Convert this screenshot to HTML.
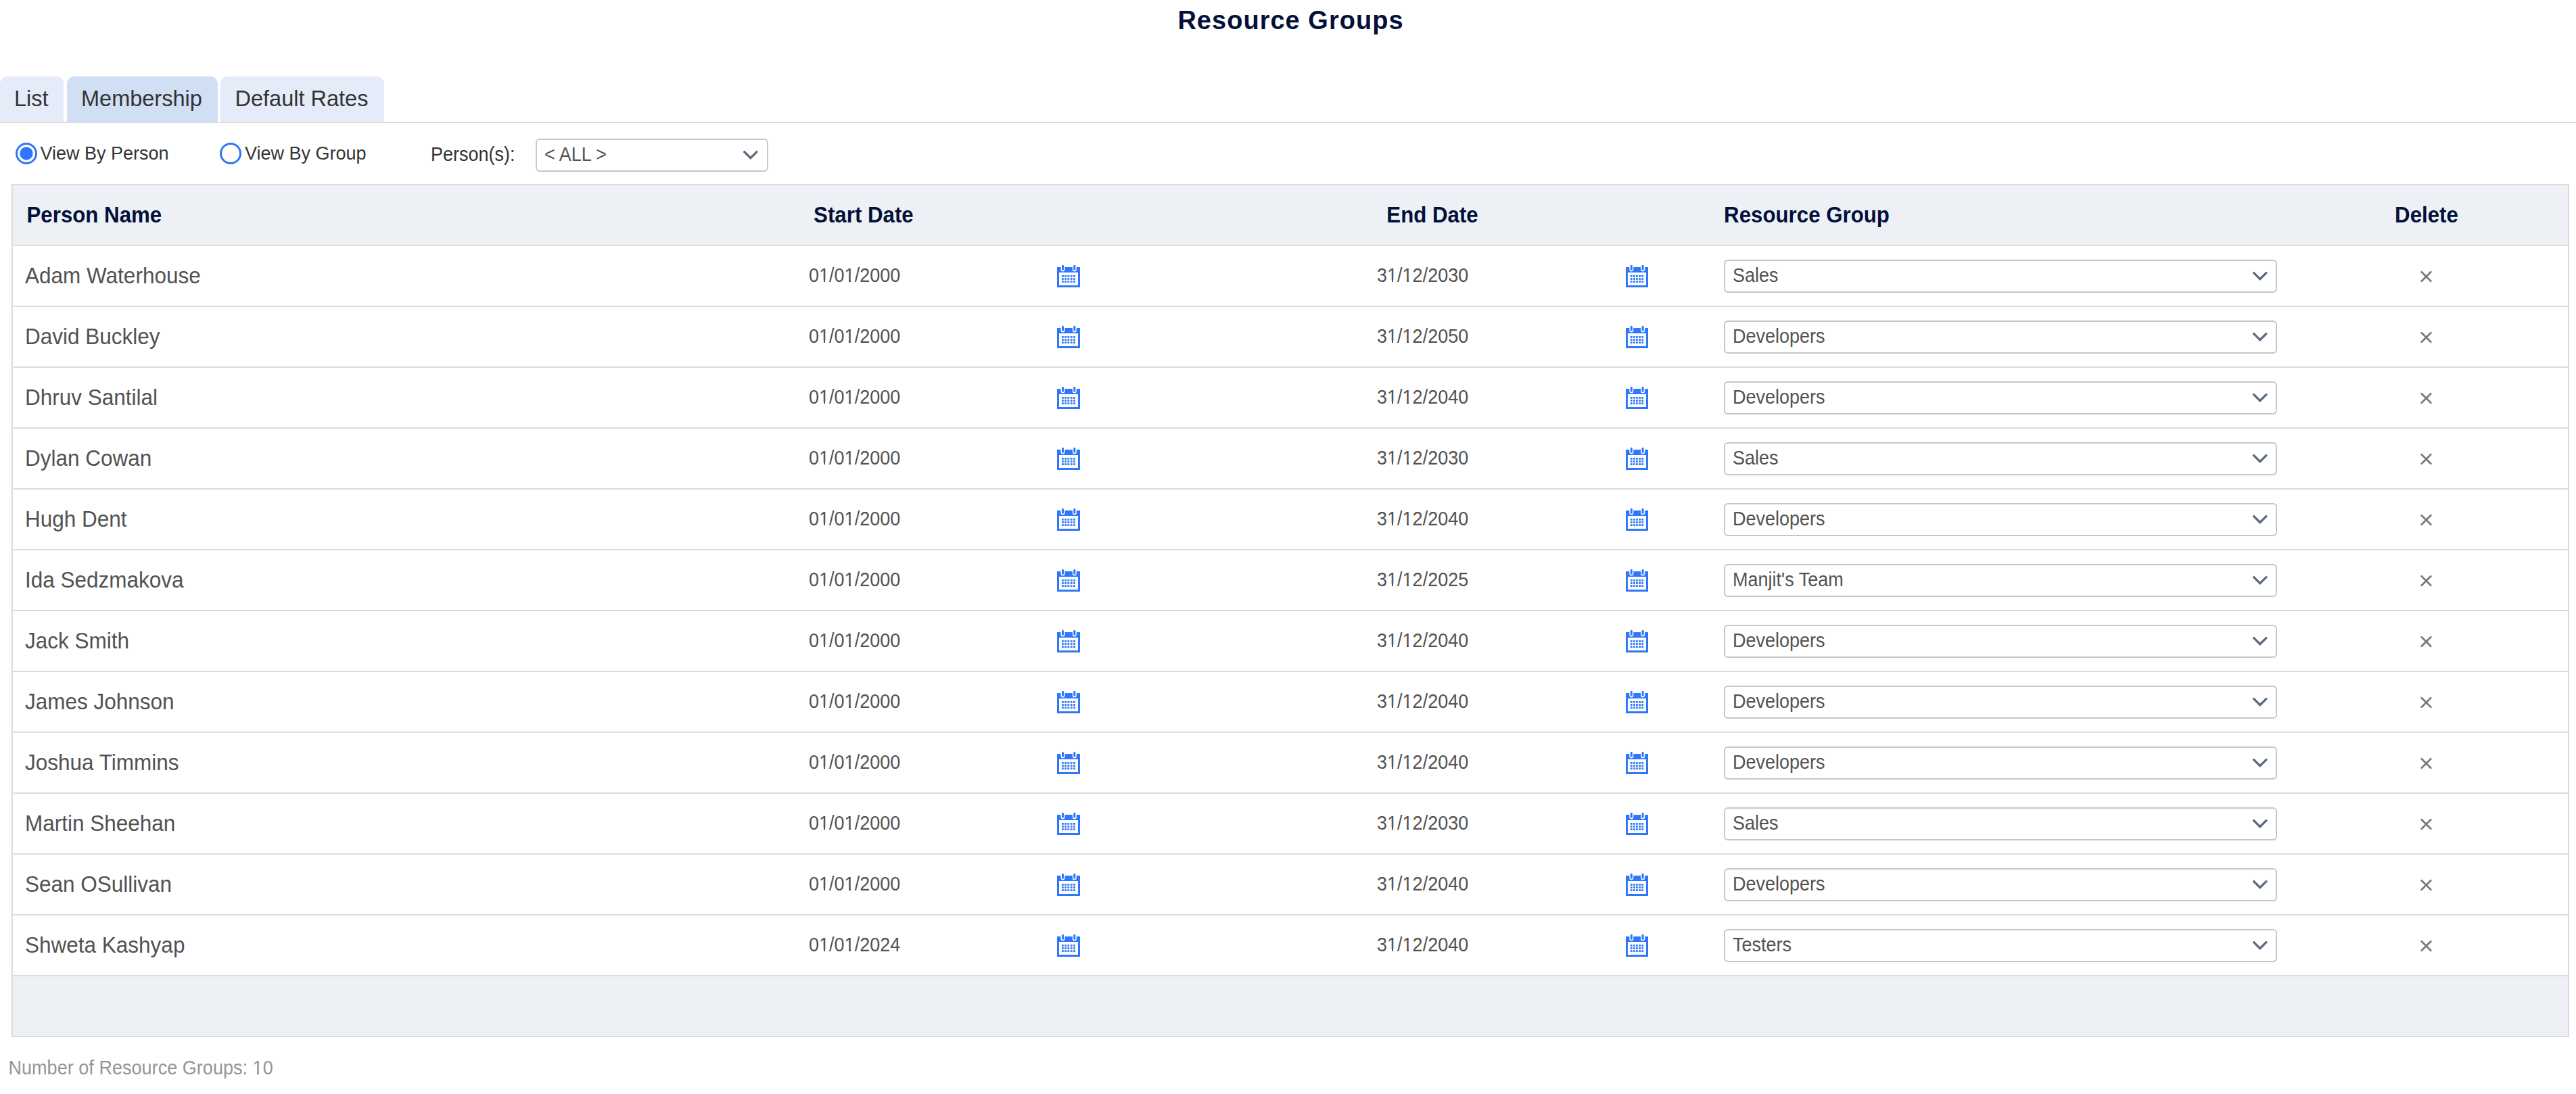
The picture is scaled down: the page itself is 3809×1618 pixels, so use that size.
<!DOCTYPE html><html><head><meta charset="utf-8"><style>
*{box-sizing:border-box;margin:0;padding:0}
html,body{width:3809px;height:1618px;overflow:hidden;background:#fff}
body{position:relative;font-family:"Liberation Sans",sans-serif;color:#525252}
.a{position:absolute;white-space:nowrap}
.title{left:0;top:0;width:3809px;text-align:center;font-size:38px;font-weight:700;color:#02103a;letter-spacing:1.02px;line-height:38px;top:11px;padding-left:8px}
.tab{position:absolute;top:113px;height:67px;border-radius:11px 11px 0 0;background:#e5ebf8;font-size:32.5px;line-height:32.5px;color:#333;padding-top:17px}
.tab.on{background:#d1dff5}
.tabline{position:absolute;left:0;top:180px;width:3809px;height:2px;background:#dcdcdc}
.radio{position:absolute;top:211px;width:32px;height:32px;border-radius:50%;border:3px solid #3176f8;background:#fff}
.radio.on::after{content:"";position:absolute;left:3.5px;top:3.5px;width:19px;height:19px;border-radius:50%;background:#3176f8}
.lbl{font-size:27px;line-height:27px;color:#333}
.sel{position:absolute;border:2px solid #c6c6c6;border-radius:6px;background:#fff}
.tbl{position:absolute;left:17px;top:272px;width:3782px;height:1262px;border:2px solid #dcdcdc;background:#fff}
.hdr{position:absolute;left:0;top:0;width:3778px;height:90px;background:#edf1f6;border-bottom:2px solid #dcdcdc}
.row{position:absolute;left:0;width:3778px;height:90px;border-bottom:2px solid #dcdcdc}
.foot{position:absolute;left:0;top:1170px;width:3778px;height:88px;background:#edf1f6}
.h{position:absolute;top:29px;transform:scaleY(1.04);transform-origin:0 26px;font-size:31.25px;line-height:31.25px;font-weight:700;color:#02103a}
.nm{position:absolute;font-size:31.5px;line-height:31.5px;color:#525252;transform:scaleY(1.04);transform-origin:0 26px}
.dt{position:absolute;font-size:27px;line-height:27px;color:#525252;transform:scaleY(1.06);transform-origin:0 22px}
.one{font-style:normal;position:relative}
.one::before,.one::after{content:"";position:absolute;top:calc(0.905em - 0.115em);height:0.15em;background:#fff}
.one::before{left:0.03em;width:0.216em}
.one::after{left:0.342em;width:0.18em}
</style></head><body>
<div class="a title">Resource Groups</div>
<div class="tab" style="left:0;width:94px;padding-left:21px">List</div>
<div class="tab on" style="left:99px;width:223px;padding-left:21px">Membership</div>
<div class="tab" style="left:326px;width:242px;padding-left:21.5px">Default Rates</div>
<div class="tabline"></div>
<svg class="a" style="left:23px;top:211px" width="32" height="32" viewBox="0 0 32 32"><circle cx="16" cy="16" r="14.5" fill="#fff" stroke="#2f75f9" stroke-width="3"/><circle cx="16" cy="16" r="9.7" fill="#2f75f9"/></svg>
<div class="a lbl" style="left:59.5px;top:213.5px">View By Person</div>
<svg class="a" style="left:325px;top:211px" width="32" height="32" viewBox="0 0 32 32"><circle cx="16" cy="16" r="14.5" fill="#fff" stroke="#2f75f9" stroke-width="3"/></svg>
<div class="a lbl" style="left:362px;top:213.5px">View By Group</div>
<div class="a lbl" style="left:637px;top:216px;transform:scaleY(1.06);transform-origin:0 22px">Person(s):</div>
<div class="sel" style="left:792px;top:205px;width:343.5px;height:49px"></div>
<div class="a lbl" style="left:805px;top:216px;color:#555;transform:scaleY(1.06);transform-origin:0 22px">&lt; ALL &gt;</div>
<div class="a" style="left:1098px;top:220.5px"><svg width="24" height="15" viewBox="0 0 24 15"><path d="M1.7 2.6L11.8 12.7L21.9 2.6" fill="none" stroke="#5a6a7c" stroke-width="3.3"/></svg></div>
<div class="tbl">
<div class="hdr">
<div class="a h" style="left:20.5px">Person Name</div>
<div class="a h" style="left:1184.1px">Start Date</div>
<div class="a h" style="left:2031.3px">End Date</div>
<div class="a h" style="left:2530.1px">Resource Group</div>
<div class="a h" style="left:3522.1px">Delete</div>
</div>
<div class="row" style="top:90px">
<div class="a nm" style="left:18px;top:29px">Adam Waterhouse</div>
<div class="a dt" style="left:1177px;top:31px">0<i class="one">1</i>/0<i class="one">1</i>/2000</div>
<div class="a" style="left:1544px;top:27px"><svg width="34" height="34" viewBox="0 0 34 34" fill="#2e77fc"><path fill-rule="evenodd" d="M0 4H34V34H0Z M3 12H31V31H3Z"/><rect x="5.50" y="1.5" width="6" height="9" rx="3" fill="#fff"/><rect x="22.80" y="1.5" width="6" height="9" rx="3" fill="#fff"/><rect x="7.00" y="0.8" width="3" height="8" rx="1.5"/><rect x="24.30" y="0.8" width="3" height="8" rx="1.5"/><rect x="7" y="16" width="2.8" height="2.8"/><rect x="11.2" y="16" width="2.8" height="2.8"/><rect x="15.4" y="16" width="2.8" height="2.8"/><rect x="19.8" y="16" width="2.8" height="2.8"/><rect x="24.1" y="16" width="2.8" height="2.8"/><rect x="7" y="20.1" width="2.8" height="2.8"/><rect x="11.2" y="20.1" width="2.8" height="2.8"/><rect x="15.4" y="20.1" width="2.8" height="2.8"/><rect x="19.8" y="20.1" width="2.8" height="2.8"/><rect x="24.1" y="20.1" width="2.8" height="2.8"/><rect x="7" y="24.2" width="2.8" height="2.8"/><rect x="11.2" y="24.2" width="2.8" height="2.8"/><rect x="15.4" y="24.2" width="2.8" height="2.8"/><rect x="19.8" y="24.2" width="2.8" height="2.8"/><rect x="24.1" y="24.2" width="2.8" height="2.8"/></svg></div>
<div class="a dt" style="left:2017px;top:31px">3<i class="one">1</i>/<i class="one">1</i>2/2030</div>
<div class="a" style="left:2385px;top:27px"><svg width="33" height="34" viewBox="0 0 33 34" fill="#2e77fc"><path fill-rule="evenodd" d="M0 4H33V34H0Z M2.9 12H30V31H2.9Z"/><rect x="5.30" y="1.5" width="6" height="9" rx="3" fill="#fff"/><rect x="22.10" y="1.5" width="6" height="9" rx="3" fill="#fff"/><rect x="6.80" y="0.8" width="3" height="8" rx="1.5"/><rect x="23.60" y="0.8" width="3" height="8" rx="1.5"/><rect x="6.8" y="16" width="2.8" height="2.8"/><rect x="11.1" y="16" width="2.8" height="2.8"/><rect x="15.0" y="16" width="2.8" height="2.8"/><rect x="19.2" y="16" width="2.8" height="2.8"/><rect x="23.3" y="16" width="2.8" height="2.8"/><rect x="6.8" y="20.1" width="2.8" height="2.8"/><rect x="11.1" y="20.1" width="2.8" height="2.8"/><rect x="15.0" y="20.1" width="2.8" height="2.8"/><rect x="19.2" y="20.1" width="2.8" height="2.8"/><rect x="23.3" y="20.1" width="2.8" height="2.8"/><rect x="6.8" y="24.2" width="2.8" height="2.8"/><rect x="11.1" y="24.2" width="2.8" height="2.8"/><rect x="15.0" y="24.2" width="2.8" height="2.8"/><rect x="19.2" y="24.2" width="2.8" height="2.8"/><rect x="23.3" y="24.2" width="2.8" height="2.8"/></svg></div>
<div class="sel" style="left:2530px;top:20px;width:818px;height:49px"></div>
<div class="a dt" style="left:2543px;top:31px">Sales</div>
<div class="a" style="left:3311px;top:35.5px"><svg width="24" height="15" viewBox="0 0 24 15"><path d="M1.7 2.6L11.8 12.7L21.9 2.6" fill="none" stroke="#5a6a7c" stroke-width="3.3"/></svg></div>
<div class="a" style="left:3559px;top:35.5px"><svg width="18" height="18" viewBox="0 0 18 18"><path d="M2.7 2.2L16.3 15.8M16.3 2.2L2.7 15.8" fill="none" stroke="#7a7a7a" stroke-width="2.7" stroke-linecap="round"/></svg></div>
</div>
<div class="row" style="top:180px">
<div class="a nm" style="left:18px;top:29px">David Buckley</div>
<div class="a dt" style="left:1177px;top:31px">0<i class="one">1</i>/0<i class="one">1</i>/2000</div>
<div class="a" style="left:1544px;top:27px"><svg width="34" height="34" viewBox="0 0 34 34" fill="#2e77fc"><path fill-rule="evenodd" d="M0 4H34V34H0Z M3 12H31V31H3Z"/><rect x="5.50" y="1.5" width="6" height="9" rx="3" fill="#fff"/><rect x="22.80" y="1.5" width="6" height="9" rx="3" fill="#fff"/><rect x="7.00" y="0.8" width="3" height="8" rx="1.5"/><rect x="24.30" y="0.8" width="3" height="8" rx="1.5"/><rect x="7" y="16" width="2.8" height="2.8"/><rect x="11.2" y="16" width="2.8" height="2.8"/><rect x="15.4" y="16" width="2.8" height="2.8"/><rect x="19.8" y="16" width="2.8" height="2.8"/><rect x="24.1" y="16" width="2.8" height="2.8"/><rect x="7" y="20.1" width="2.8" height="2.8"/><rect x="11.2" y="20.1" width="2.8" height="2.8"/><rect x="15.4" y="20.1" width="2.8" height="2.8"/><rect x="19.8" y="20.1" width="2.8" height="2.8"/><rect x="24.1" y="20.1" width="2.8" height="2.8"/><rect x="7" y="24.2" width="2.8" height="2.8"/><rect x="11.2" y="24.2" width="2.8" height="2.8"/><rect x="15.4" y="24.2" width="2.8" height="2.8"/><rect x="19.8" y="24.2" width="2.8" height="2.8"/><rect x="24.1" y="24.2" width="2.8" height="2.8"/></svg></div>
<div class="a dt" style="left:2017px;top:31px">3<i class="one">1</i>/<i class="one">1</i>2/2050</div>
<div class="a" style="left:2385px;top:27px"><svg width="33" height="34" viewBox="0 0 33 34" fill="#2e77fc"><path fill-rule="evenodd" d="M0 4H33V34H0Z M2.9 12H30V31H2.9Z"/><rect x="5.30" y="1.5" width="6" height="9" rx="3" fill="#fff"/><rect x="22.10" y="1.5" width="6" height="9" rx="3" fill="#fff"/><rect x="6.80" y="0.8" width="3" height="8" rx="1.5"/><rect x="23.60" y="0.8" width="3" height="8" rx="1.5"/><rect x="6.8" y="16" width="2.8" height="2.8"/><rect x="11.1" y="16" width="2.8" height="2.8"/><rect x="15.0" y="16" width="2.8" height="2.8"/><rect x="19.2" y="16" width="2.8" height="2.8"/><rect x="23.3" y="16" width="2.8" height="2.8"/><rect x="6.8" y="20.1" width="2.8" height="2.8"/><rect x="11.1" y="20.1" width="2.8" height="2.8"/><rect x="15.0" y="20.1" width="2.8" height="2.8"/><rect x="19.2" y="20.1" width="2.8" height="2.8"/><rect x="23.3" y="20.1" width="2.8" height="2.8"/><rect x="6.8" y="24.2" width="2.8" height="2.8"/><rect x="11.1" y="24.2" width="2.8" height="2.8"/><rect x="15.0" y="24.2" width="2.8" height="2.8"/><rect x="19.2" y="24.2" width="2.8" height="2.8"/><rect x="23.3" y="24.2" width="2.8" height="2.8"/></svg></div>
<div class="sel" style="left:2530px;top:20px;width:818px;height:49px"></div>
<div class="a dt" style="left:2543px;top:31px">Developers</div>
<div class="a" style="left:3311px;top:35.5px"><svg width="24" height="15" viewBox="0 0 24 15"><path d="M1.7 2.6L11.8 12.7L21.9 2.6" fill="none" stroke="#5a6a7c" stroke-width="3.3"/></svg></div>
<div class="a" style="left:3559px;top:35.5px"><svg width="18" height="18" viewBox="0 0 18 18"><path d="M2.7 2.2L16.3 15.8M16.3 2.2L2.7 15.8" fill="none" stroke="#7a7a7a" stroke-width="2.7" stroke-linecap="round"/></svg></div>
</div>
<div class="row" style="top:270px">
<div class="a nm" style="left:18px;top:29px">Dhruv Santilal</div>
<div class="a dt" style="left:1177px;top:31px">0<i class="one">1</i>/0<i class="one">1</i>/2000</div>
<div class="a" style="left:1544px;top:27px"><svg width="34" height="34" viewBox="0 0 34 34" fill="#2e77fc"><path fill-rule="evenodd" d="M0 4H34V34H0Z M3 12H31V31H3Z"/><rect x="5.50" y="1.5" width="6" height="9" rx="3" fill="#fff"/><rect x="22.80" y="1.5" width="6" height="9" rx="3" fill="#fff"/><rect x="7.00" y="0.8" width="3" height="8" rx="1.5"/><rect x="24.30" y="0.8" width="3" height="8" rx="1.5"/><rect x="7" y="16" width="2.8" height="2.8"/><rect x="11.2" y="16" width="2.8" height="2.8"/><rect x="15.4" y="16" width="2.8" height="2.8"/><rect x="19.8" y="16" width="2.8" height="2.8"/><rect x="24.1" y="16" width="2.8" height="2.8"/><rect x="7" y="20.1" width="2.8" height="2.8"/><rect x="11.2" y="20.1" width="2.8" height="2.8"/><rect x="15.4" y="20.1" width="2.8" height="2.8"/><rect x="19.8" y="20.1" width="2.8" height="2.8"/><rect x="24.1" y="20.1" width="2.8" height="2.8"/><rect x="7" y="24.2" width="2.8" height="2.8"/><rect x="11.2" y="24.2" width="2.8" height="2.8"/><rect x="15.4" y="24.2" width="2.8" height="2.8"/><rect x="19.8" y="24.2" width="2.8" height="2.8"/><rect x="24.1" y="24.2" width="2.8" height="2.8"/></svg></div>
<div class="a dt" style="left:2017px;top:31px">3<i class="one">1</i>/<i class="one">1</i>2/2040</div>
<div class="a" style="left:2385px;top:27px"><svg width="33" height="34" viewBox="0 0 33 34" fill="#2e77fc"><path fill-rule="evenodd" d="M0 4H33V34H0Z M2.9 12H30V31H2.9Z"/><rect x="5.30" y="1.5" width="6" height="9" rx="3" fill="#fff"/><rect x="22.10" y="1.5" width="6" height="9" rx="3" fill="#fff"/><rect x="6.80" y="0.8" width="3" height="8" rx="1.5"/><rect x="23.60" y="0.8" width="3" height="8" rx="1.5"/><rect x="6.8" y="16" width="2.8" height="2.8"/><rect x="11.1" y="16" width="2.8" height="2.8"/><rect x="15.0" y="16" width="2.8" height="2.8"/><rect x="19.2" y="16" width="2.8" height="2.8"/><rect x="23.3" y="16" width="2.8" height="2.8"/><rect x="6.8" y="20.1" width="2.8" height="2.8"/><rect x="11.1" y="20.1" width="2.8" height="2.8"/><rect x="15.0" y="20.1" width="2.8" height="2.8"/><rect x="19.2" y="20.1" width="2.8" height="2.8"/><rect x="23.3" y="20.1" width="2.8" height="2.8"/><rect x="6.8" y="24.2" width="2.8" height="2.8"/><rect x="11.1" y="24.2" width="2.8" height="2.8"/><rect x="15.0" y="24.2" width="2.8" height="2.8"/><rect x="19.2" y="24.2" width="2.8" height="2.8"/><rect x="23.3" y="24.2" width="2.8" height="2.8"/></svg></div>
<div class="sel" style="left:2530px;top:20px;width:818px;height:49px"></div>
<div class="a dt" style="left:2543px;top:31px">Developers</div>
<div class="a" style="left:3311px;top:35.5px"><svg width="24" height="15" viewBox="0 0 24 15"><path d="M1.7 2.6L11.8 12.7L21.9 2.6" fill="none" stroke="#5a6a7c" stroke-width="3.3"/></svg></div>
<div class="a" style="left:3559px;top:35.5px"><svg width="18" height="18" viewBox="0 0 18 18"><path d="M2.7 2.2L16.3 15.8M16.3 2.2L2.7 15.8" fill="none" stroke="#7a7a7a" stroke-width="2.7" stroke-linecap="round"/></svg></div>
</div>
<div class="row" style="top:360px">
<div class="a nm" style="left:18px;top:29px">Dylan Cowan</div>
<div class="a dt" style="left:1177px;top:31px">0<i class="one">1</i>/0<i class="one">1</i>/2000</div>
<div class="a" style="left:1544px;top:27px"><svg width="34" height="34" viewBox="0 0 34 34" fill="#2e77fc"><path fill-rule="evenodd" d="M0 4H34V34H0Z M3 12H31V31H3Z"/><rect x="5.50" y="1.5" width="6" height="9" rx="3" fill="#fff"/><rect x="22.80" y="1.5" width="6" height="9" rx="3" fill="#fff"/><rect x="7.00" y="0.8" width="3" height="8" rx="1.5"/><rect x="24.30" y="0.8" width="3" height="8" rx="1.5"/><rect x="7" y="16" width="2.8" height="2.8"/><rect x="11.2" y="16" width="2.8" height="2.8"/><rect x="15.4" y="16" width="2.8" height="2.8"/><rect x="19.8" y="16" width="2.8" height="2.8"/><rect x="24.1" y="16" width="2.8" height="2.8"/><rect x="7" y="20.1" width="2.8" height="2.8"/><rect x="11.2" y="20.1" width="2.8" height="2.8"/><rect x="15.4" y="20.1" width="2.8" height="2.8"/><rect x="19.8" y="20.1" width="2.8" height="2.8"/><rect x="24.1" y="20.1" width="2.8" height="2.8"/><rect x="7" y="24.2" width="2.8" height="2.8"/><rect x="11.2" y="24.2" width="2.8" height="2.8"/><rect x="15.4" y="24.2" width="2.8" height="2.8"/><rect x="19.8" y="24.2" width="2.8" height="2.8"/><rect x="24.1" y="24.2" width="2.8" height="2.8"/></svg></div>
<div class="a dt" style="left:2017px;top:31px">3<i class="one">1</i>/<i class="one">1</i>2/2030</div>
<div class="a" style="left:2385px;top:27px"><svg width="33" height="34" viewBox="0 0 33 34" fill="#2e77fc"><path fill-rule="evenodd" d="M0 4H33V34H0Z M2.9 12H30V31H2.9Z"/><rect x="5.30" y="1.5" width="6" height="9" rx="3" fill="#fff"/><rect x="22.10" y="1.5" width="6" height="9" rx="3" fill="#fff"/><rect x="6.80" y="0.8" width="3" height="8" rx="1.5"/><rect x="23.60" y="0.8" width="3" height="8" rx="1.5"/><rect x="6.8" y="16" width="2.8" height="2.8"/><rect x="11.1" y="16" width="2.8" height="2.8"/><rect x="15.0" y="16" width="2.8" height="2.8"/><rect x="19.2" y="16" width="2.8" height="2.8"/><rect x="23.3" y="16" width="2.8" height="2.8"/><rect x="6.8" y="20.1" width="2.8" height="2.8"/><rect x="11.1" y="20.1" width="2.8" height="2.8"/><rect x="15.0" y="20.1" width="2.8" height="2.8"/><rect x="19.2" y="20.1" width="2.8" height="2.8"/><rect x="23.3" y="20.1" width="2.8" height="2.8"/><rect x="6.8" y="24.2" width="2.8" height="2.8"/><rect x="11.1" y="24.2" width="2.8" height="2.8"/><rect x="15.0" y="24.2" width="2.8" height="2.8"/><rect x="19.2" y="24.2" width="2.8" height="2.8"/><rect x="23.3" y="24.2" width="2.8" height="2.8"/></svg></div>
<div class="sel" style="left:2530px;top:20px;width:818px;height:49px"></div>
<div class="a dt" style="left:2543px;top:31px">Sales</div>
<div class="a" style="left:3311px;top:35.5px"><svg width="24" height="15" viewBox="0 0 24 15"><path d="M1.7 2.6L11.8 12.7L21.9 2.6" fill="none" stroke="#5a6a7c" stroke-width="3.3"/></svg></div>
<div class="a" style="left:3559px;top:35.5px"><svg width="18" height="18" viewBox="0 0 18 18"><path d="M2.7 2.2L16.3 15.8M16.3 2.2L2.7 15.8" fill="none" stroke="#7a7a7a" stroke-width="2.7" stroke-linecap="round"/></svg></div>
</div>
<div class="row" style="top:450px">
<div class="a nm" style="left:18px;top:29px">Hugh Dent</div>
<div class="a dt" style="left:1177px;top:31px">0<i class="one">1</i>/0<i class="one">1</i>/2000</div>
<div class="a" style="left:1544px;top:27px"><svg width="34" height="34" viewBox="0 0 34 34" fill="#2e77fc"><path fill-rule="evenodd" d="M0 4H34V34H0Z M3 12H31V31H3Z"/><rect x="5.50" y="1.5" width="6" height="9" rx="3" fill="#fff"/><rect x="22.80" y="1.5" width="6" height="9" rx="3" fill="#fff"/><rect x="7.00" y="0.8" width="3" height="8" rx="1.5"/><rect x="24.30" y="0.8" width="3" height="8" rx="1.5"/><rect x="7" y="16" width="2.8" height="2.8"/><rect x="11.2" y="16" width="2.8" height="2.8"/><rect x="15.4" y="16" width="2.8" height="2.8"/><rect x="19.8" y="16" width="2.8" height="2.8"/><rect x="24.1" y="16" width="2.8" height="2.8"/><rect x="7" y="20.1" width="2.8" height="2.8"/><rect x="11.2" y="20.1" width="2.8" height="2.8"/><rect x="15.4" y="20.1" width="2.8" height="2.8"/><rect x="19.8" y="20.1" width="2.8" height="2.8"/><rect x="24.1" y="20.1" width="2.8" height="2.8"/><rect x="7" y="24.2" width="2.8" height="2.8"/><rect x="11.2" y="24.2" width="2.8" height="2.8"/><rect x="15.4" y="24.2" width="2.8" height="2.8"/><rect x="19.8" y="24.2" width="2.8" height="2.8"/><rect x="24.1" y="24.2" width="2.8" height="2.8"/></svg></div>
<div class="a dt" style="left:2017px;top:31px">3<i class="one">1</i>/<i class="one">1</i>2/2040</div>
<div class="a" style="left:2385px;top:27px"><svg width="33" height="34" viewBox="0 0 33 34" fill="#2e77fc"><path fill-rule="evenodd" d="M0 4H33V34H0Z M2.9 12H30V31H2.9Z"/><rect x="5.30" y="1.5" width="6" height="9" rx="3" fill="#fff"/><rect x="22.10" y="1.5" width="6" height="9" rx="3" fill="#fff"/><rect x="6.80" y="0.8" width="3" height="8" rx="1.5"/><rect x="23.60" y="0.8" width="3" height="8" rx="1.5"/><rect x="6.8" y="16" width="2.8" height="2.8"/><rect x="11.1" y="16" width="2.8" height="2.8"/><rect x="15.0" y="16" width="2.8" height="2.8"/><rect x="19.2" y="16" width="2.8" height="2.8"/><rect x="23.3" y="16" width="2.8" height="2.8"/><rect x="6.8" y="20.1" width="2.8" height="2.8"/><rect x="11.1" y="20.1" width="2.8" height="2.8"/><rect x="15.0" y="20.1" width="2.8" height="2.8"/><rect x="19.2" y="20.1" width="2.8" height="2.8"/><rect x="23.3" y="20.1" width="2.8" height="2.8"/><rect x="6.8" y="24.2" width="2.8" height="2.8"/><rect x="11.1" y="24.2" width="2.8" height="2.8"/><rect x="15.0" y="24.2" width="2.8" height="2.8"/><rect x="19.2" y="24.2" width="2.8" height="2.8"/><rect x="23.3" y="24.2" width="2.8" height="2.8"/></svg></div>
<div class="sel" style="left:2530px;top:20px;width:818px;height:49px"></div>
<div class="a dt" style="left:2543px;top:31px">Developers</div>
<div class="a" style="left:3311px;top:35.5px"><svg width="24" height="15" viewBox="0 0 24 15"><path d="M1.7 2.6L11.8 12.7L21.9 2.6" fill="none" stroke="#5a6a7c" stroke-width="3.3"/></svg></div>
<div class="a" style="left:3559px;top:35.5px"><svg width="18" height="18" viewBox="0 0 18 18"><path d="M2.7 2.2L16.3 15.8M16.3 2.2L2.7 15.8" fill="none" stroke="#7a7a7a" stroke-width="2.7" stroke-linecap="round"/></svg></div>
</div>
<div class="row" style="top:540px">
<div class="a nm" style="left:18px;top:29px">Ida Sedzmakova</div>
<div class="a dt" style="left:1177px;top:31px">0<i class="one">1</i>/0<i class="one">1</i>/2000</div>
<div class="a" style="left:1544px;top:27px"><svg width="34" height="34" viewBox="0 0 34 34" fill="#2e77fc"><path fill-rule="evenodd" d="M0 4H34V34H0Z M3 12H31V31H3Z"/><rect x="5.50" y="1.5" width="6" height="9" rx="3" fill="#fff"/><rect x="22.80" y="1.5" width="6" height="9" rx="3" fill="#fff"/><rect x="7.00" y="0.8" width="3" height="8" rx="1.5"/><rect x="24.30" y="0.8" width="3" height="8" rx="1.5"/><rect x="7" y="16" width="2.8" height="2.8"/><rect x="11.2" y="16" width="2.8" height="2.8"/><rect x="15.4" y="16" width="2.8" height="2.8"/><rect x="19.8" y="16" width="2.8" height="2.8"/><rect x="24.1" y="16" width="2.8" height="2.8"/><rect x="7" y="20.1" width="2.8" height="2.8"/><rect x="11.2" y="20.1" width="2.8" height="2.8"/><rect x="15.4" y="20.1" width="2.8" height="2.8"/><rect x="19.8" y="20.1" width="2.8" height="2.8"/><rect x="24.1" y="20.1" width="2.8" height="2.8"/><rect x="7" y="24.2" width="2.8" height="2.8"/><rect x="11.2" y="24.2" width="2.8" height="2.8"/><rect x="15.4" y="24.2" width="2.8" height="2.8"/><rect x="19.8" y="24.2" width="2.8" height="2.8"/><rect x="24.1" y="24.2" width="2.8" height="2.8"/></svg></div>
<div class="a dt" style="left:2017px;top:31px">3<i class="one">1</i>/<i class="one">1</i>2/2025</div>
<div class="a" style="left:2385px;top:27px"><svg width="33" height="34" viewBox="0 0 33 34" fill="#2e77fc"><path fill-rule="evenodd" d="M0 4H33V34H0Z M2.9 12H30V31H2.9Z"/><rect x="5.30" y="1.5" width="6" height="9" rx="3" fill="#fff"/><rect x="22.10" y="1.5" width="6" height="9" rx="3" fill="#fff"/><rect x="6.80" y="0.8" width="3" height="8" rx="1.5"/><rect x="23.60" y="0.8" width="3" height="8" rx="1.5"/><rect x="6.8" y="16" width="2.8" height="2.8"/><rect x="11.1" y="16" width="2.8" height="2.8"/><rect x="15.0" y="16" width="2.8" height="2.8"/><rect x="19.2" y="16" width="2.8" height="2.8"/><rect x="23.3" y="16" width="2.8" height="2.8"/><rect x="6.8" y="20.1" width="2.8" height="2.8"/><rect x="11.1" y="20.1" width="2.8" height="2.8"/><rect x="15.0" y="20.1" width="2.8" height="2.8"/><rect x="19.2" y="20.1" width="2.8" height="2.8"/><rect x="23.3" y="20.1" width="2.8" height="2.8"/><rect x="6.8" y="24.2" width="2.8" height="2.8"/><rect x="11.1" y="24.2" width="2.8" height="2.8"/><rect x="15.0" y="24.2" width="2.8" height="2.8"/><rect x="19.2" y="24.2" width="2.8" height="2.8"/><rect x="23.3" y="24.2" width="2.8" height="2.8"/></svg></div>
<div class="sel" style="left:2530px;top:20px;width:818px;height:49px"></div>
<div class="a dt" style="left:2543px;top:31px">Manjit's Team</div>
<div class="a" style="left:3311px;top:35.5px"><svg width="24" height="15" viewBox="0 0 24 15"><path d="M1.7 2.6L11.8 12.7L21.9 2.6" fill="none" stroke="#5a6a7c" stroke-width="3.3"/></svg></div>
<div class="a" style="left:3559px;top:35.5px"><svg width="18" height="18" viewBox="0 0 18 18"><path d="M2.7 2.2L16.3 15.8M16.3 2.2L2.7 15.8" fill="none" stroke="#7a7a7a" stroke-width="2.7" stroke-linecap="round"/></svg></div>
</div>
<div class="row" style="top:630px">
<div class="a nm" style="left:18px;top:29px">Jack Smith</div>
<div class="a dt" style="left:1177px;top:31px">0<i class="one">1</i>/0<i class="one">1</i>/2000</div>
<div class="a" style="left:1544px;top:27px"><svg width="34" height="34" viewBox="0 0 34 34" fill="#2e77fc"><path fill-rule="evenodd" d="M0 4H34V34H0Z M3 12H31V31H3Z"/><rect x="5.50" y="1.5" width="6" height="9" rx="3" fill="#fff"/><rect x="22.80" y="1.5" width="6" height="9" rx="3" fill="#fff"/><rect x="7.00" y="0.8" width="3" height="8" rx="1.5"/><rect x="24.30" y="0.8" width="3" height="8" rx="1.5"/><rect x="7" y="16" width="2.8" height="2.8"/><rect x="11.2" y="16" width="2.8" height="2.8"/><rect x="15.4" y="16" width="2.8" height="2.8"/><rect x="19.8" y="16" width="2.8" height="2.8"/><rect x="24.1" y="16" width="2.8" height="2.8"/><rect x="7" y="20.1" width="2.8" height="2.8"/><rect x="11.2" y="20.1" width="2.8" height="2.8"/><rect x="15.4" y="20.1" width="2.8" height="2.8"/><rect x="19.8" y="20.1" width="2.8" height="2.8"/><rect x="24.1" y="20.1" width="2.8" height="2.8"/><rect x="7" y="24.2" width="2.8" height="2.8"/><rect x="11.2" y="24.2" width="2.8" height="2.8"/><rect x="15.4" y="24.2" width="2.8" height="2.8"/><rect x="19.8" y="24.2" width="2.8" height="2.8"/><rect x="24.1" y="24.2" width="2.8" height="2.8"/></svg></div>
<div class="a dt" style="left:2017px;top:31px">3<i class="one">1</i>/<i class="one">1</i>2/2040</div>
<div class="a" style="left:2385px;top:27px"><svg width="33" height="34" viewBox="0 0 33 34" fill="#2e77fc"><path fill-rule="evenodd" d="M0 4H33V34H0Z M2.9 12H30V31H2.9Z"/><rect x="5.30" y="1.5" width="6" height="9" rx="3" fill="#fff"/><rect x="22.10" y="1.5" width="6" height="9" rx="3" fill="#fff"/><rect x="6.80" y="0.8" width="3" height="8" rx="1.5"/><rect x="23.60" y="0.8" width="3" height="8" rx="1.5"/><rect x="6.8" y="16" width="2.8" height="2.8"/><rect x="11.1" y="16" width="2.8" height="2.8"/><rect x="15.0" y="16" width="2.8" height="2.8"/><rect x="19.2" y="16" width="2.8" height="2.8"/><rect x="23.3" y="16" width="2.8" height="2.8"/><rect x="6.8" y="20.1" width="2.8" height="2.8"/><rect x="11.1" y="20.1" width="2.8" height="2.8"/><rect x="15.0" y="20.1" width="2.8" height="2.8"/><rect x="19.2" y="20.1" width="2.8" height="2.8"/><rect x="23.3" y="20.1" width="2.8" height="2.8"/><rect x="6.8" y="24.2" width="2.8" height="2.8"/><rect x="11.1" y="24.2" width="2.8" height="2.8"/><rect x="15.0" y="24.2" width="2.8" height="2.8"/><rect x="19.2" y="24.2" width="2.8" height="2.8"/><rect x="23.3" y="24.2" width="2.8" height="2.8"/></svg></div>
<div class="sel" style="left:2530px;top:20px;width:818px;height:49px"></div>
<div class="a dt" style="left:2543px;top:31px">Developers</div>
<div class="a" style="left:3311px;top:35.5px"><svg width="24" height="15" viewBox="0 0 24 15"><path d="M1.7 2.6L11.8 12.7L21.9 2.6" fill="none" stroke="#5a6a7c" stroke-width="3.3"/></svg></div>
<div class="a" style="left:3559px;top:35.5px"><svg width="18" height="18" viewBox="0 0 18 18"><path d="M2.7 2.2L16.3 15.8M16.3 2.2L2.7 15.8" fill="none" stroke="#7a7a7a" stroke-width="2.7" stroke-linecap="round"/></svg></div>
</div>
<div class="row" style="top:720px">
<div class="a nm" style="left:18px;top:29px">James Johnson</div>
<div class="a dt" style="left:1177px;top:31px">0<i class="one">1</i>/0<i class="one">1</i>/2000</div>
<div class="a" style="left:1544px;top:27px"><svg width="34" height="34" viewBox="0 0 34 34" fill="#2e77fc"><path fill-rule="evenodd" d="M0 4H34V34H0Z M3 12H31V31H3Z"/><rect x="5.50" y="1.5" width="6" height="9" rx="3" fill="#fff"/><rect x="22.80" y="1.5" width="6" height="9" rx="3" fill="#fff"/><rect x="7.00" y="0.8" width="3" height="8" rx="1.5"/><rect x="24.30" y="0.8" width="3" height="8" rx="1.5"/><rect x="7" y="16" width="2.8" height="2.8"/><rect x="11.2" y="16" width="2.8" height="2.8"/><rect x="15.4" y="16" width="2.8" height="2.8"/><rect x="19.8" y="16" width="2.8" height="2.8"/><rect x="24.1" y="16" width="2.8" height="2.8"/><rect x="7" y="20.1" width="2.8" height="2.8"/><rect x="11.2" y="20.1" width="2.8" height="2.8"/><rect x="15.4" y="20.1" width="2.8" height="2.8"/><rect x="19.8" y="20.1" width="2.8" height="2.8"/><rect x="24.1" y="20.1" width="2.8" height="2.8"/><rect x="7" y="24.2" width="2.8" height="2.8"/><rect x="11.2" y="24.2" width="2.8" height="2.8"/><rect x="15.4" y="24.2" width="2.8" height="2.8"/><rect x="19.8" y="24.2" width="2.8" height="2.8"/><rect x="24.1" y="24.2" width="2.8" height="2.8"/></svg></div>
<div class="a dt" style="left:2017px;top:31px">3<i class="one">1</i>/<i class="one">1</i>2/2040</div>
<div class="a" style="left:2385px;top:27px"><svg width="33" height="34" viewBox="0 0 33 34" fill="#2e77fc"><path fill-rule="evenodd" d="M0 4H33V34H0Z M2.9 12H30V31H2.9Z"/><rect x="5.30" y="1.5" width="6" height="9" rx="3" fill="#fff"/><rect x="22.10" y="1.5" width="6" height="9" rx="3" fill="#fff"/><rect x="6.80" y="0.8" width="3" height="8" rx="1.5"/><rect x="23.60" y="0.8" width="3" height="8" rx="1.5"/><rect x="6.8" y="16" width="2.8" height="2.8"/><rect x="11.1" y="16" width="2.8" height="2.8"/><rect x="15.0" y="16" width="2.8" height="2.8"/><rect x="19.2" y="16" width="2.8" height="2.8"/><rect x="23.3" y="16" width="2.8" height="2.8"/><rect x="6.8" y="20.1" width="2.8" height="2.8"/><rect x="11.1" y="20.1" width="2.8" height="2.8"/><rect x="15.0" y="20.1" width="2.8" height="2.8"/><rect x="19.2" y="20.1" width="2.8" height="2.8"/><rect x="23.3" y="20.1" width="2.8" height="2.8"/><rect x="6.8" y="24.2" width="2.8" height="2.8"/><rect x="11.1" y="24.2" width="2.8" height="2.8"/><rect x="15.0" y="24.2" width="2.8" height="2.8"/><rect x="19.2" y="24.2" width="2.8" height="2.8"/><rect x="23.3" y="24.2" width="2.8" height="2.8"/></svg></div>
<div class="sel" style="left:2530px;top:20px;width:818px;height:49px"></div>
<div class="a dt" style="left:2543px;top:31px">Developers</div>
<div class="a" style="left:3311px;top:35.5px"><svg width="24" height="15" viewBox="0 0 24 15"><path d="M1.7 2.6L11.8 12.7L21.9 2.6" fill="none" stroke="#5a6a7c" stroke-width="3.3"/></svg></div>
<div class="a" style="left:3559px;top:35.5px"><svg width="18" height="18" viewBox="0 0 18 18"><path d="M2.7 2.2L16.3 15.8M16.3 2.2L2.7 15.8" fill="none" stroke="#7a7a7a" stroke-width="2.7" stroke-linecap="round"/></svg></div>
</div>
<div class="row" style="top:810px">
<div class="a nm" style="left:18px;top:29px">Joshua Timmins</div>
<div class="a dt" style="left:1177px;top:31px">0<i class="one">1</i>/0<i class="one">1</i>/2000</div>
<div class="a" style="left:1544px;top:27px"><svg width="34" height="34" viewBox="0 0 34 34" fill="#2e77fc"><path fill-rule="evenodd" d="M0 4H34V34H0Z M3 12H31V31H3Z"/><rect x="5.50" y="1.5" width="6" height="9" rx="3" fill="#fff"/><rect x="22.80" y="1.5" width="6" height="9" rx="3" fill="#fff"/><rect x="7.00" y="0.8" width="3" height="8" rx="1.5"/><rect x="24.30" y="0.8" width="3" height="8" rx="1.5"/><rect x="7" y="16" width="2.8" height="2.8"/><rect x="11.2" y="16" width="2.8" height="2.8"/><rect x="15.4" y="16" width="2.8" height="2.8"/><rect x="19.8" y="16" width="2.8" height="2.8"/><rect x="24.1" y="16" width="2.8" height="2.8"/><rect x="7" y="20.1" width="2.8" height="2.8"/><rect x="11.2" y="20.1" width="2.8" height="2.8"/><rect x="15.4" y="20.1" width="2.8" height="2.8"/><rect x="19.8" y="20.1" width="2.8" height="2.8"/><rect x="24.1" y="20.1" width="2.8" height="2.8"/><rect x="7" y="24.2" width="2.8" height="2.8"/><rect x="11.2" y="24.2" width="2.8" height="2.8"/><rect x="15.4" y="24.2" width="2.8" height="2.8"/><rect x="19.8" y="24.2" width="2.8" height="2.8"/><rect x="24.1" y="24.2" width="2.8" height="2.8"/></svg></div>
<div class="a dt" style="left:2017px;top:31px">3<i class="one">1</i>/<i class="one">1</i>2/2040</div>
<div class="a" style="left:2385px;top:27px"><svg width="33" height="34" viewBox="0 0 33 34" fill="#2e77fc"><path fill-rule="evenodd" d="M0 4H33V34H0Z M2.9 12H30V31H2.9Z"/><rect x="5.30" y="1.5" width="6" height="9" rx="3" fill="#fff"/><rect x="22.10" y="1.5" width="6" height="9" rx="3" fill="#fff"/><rect x="6.80" y="0.8" width="3" height="8" rx="1.5"/><rect x="23.60" y="0.8" width="3" height="8" rx="1.5"/><rect x="6.8" y="16" width="2.8" height="2.8"/><rect x="11.1" y="16" width="2.8" height="2.8"/><rect x="15.0" y="16" width="2.8" height="2.8"/><rect x="19.2" y="16" width="2.8" height="2.8"/><rect x="23.3" y="16" width="2.8" height="2.8"/><rect x="6.8" y="20.1" width="2.8" height="2.8"/><rect x="11.1" y="20.1" width="2.8" height="2.8"/><rect x="15.0" y="20.1" width="2.8" height="2.8"/><rect x="19.2" y="20.1" width="2.8" height="2.8"/><rect x="23.3" y="20.1" width="2.8" height="2.8"/><rect x="6.8" y="24.2" width="2.8" height="2.8"/><rect x="11.1" y="24.2" width="2.8" height="2.8"/><rect x="15.0" y="24.2" width="2.8" height="2.8"/><rect x="19.2" y="24.2" width="2.8" height="2.8"/><rect x="23.3" y="24.2" width="2.8" height="2.8"/></svg></div>
<div class="sel" style="left:2530px;top:20px;width:818px;height:49px"></div>
<div class="a dt" style="left:2543px;top:31px">Developers</div>
<div class="a" style="left:3311px;top:35.5px"><svg width="24" height="15" viewBox="0 0 24 15"><path d="M1.7 2.6L11.8 12.7L21.9 2.6" fill="none" stroke="#5a6a7c" stroke-width="3.3"/></svg></div>
<div class="a" style="left:3559px;top:35.5px"><svg width="18" height="18" viewBox="0 0 18 18"><path d="M2.7 2.2L16.3 15.8M16.3 2.2L2.7 15.8" fill="none" stroke="#7a7a7a" stroke-width="2.7" stroke-linecap="round"/></svg></div>
</div>
<div class="row" style="top:900px">
<div class="a nm" style="left:18px;top:29px">Martin Sheehan</div>
<div class="a dt" style="left:1177px;top:31px">0<i class="one">1</i>/0<i class="one">1</i>/2000</div>
<div class="a" style="left:1544px;top:27px"><svg width="34" height="34" viewBox="0 0 34 34" fill="#2e77fc"><path fill-rule="evenodd" d="M0 4H34V34H0Z M3 12H31V31H3Z"/><rect x="5.50" y="1.5" width="6" height="9" rx="3" fill="#fff"/><rect x="22.80" y="1.5" width="6" height="9" rx="3" fill="#fff"/><rect x="7.00" y="0.8" width="3" height="8" rx="1.5"/><rect x="24.30" y="0.8" width="3" height="8" rx="1.5"/><rect x="7" y="16" width="2.8" height="2.8"/><rect x="11.2" y="16" width="2.8" height="2.8"/><rect x="15.4" y="16" width="2.8" height="2.8"/><rect x="19.8" y="16" width="2.8" height="2.8"/><rect x="24.1" y="16" width="2.8" height="2.8"/><rect x="7" y="20.1" width="2.8" height="2.8"/><rect x="11.2" y="20.1" width="2.8" height="2.8"/><rect x="15.4" y="20.1" width="2.8" height="2.8"/><rect x="19.8" y="20.1" width="2.8" height="2.8"/><rect x="24.1" y="20.1" width="2.8" height="2.8"/><rect x="7" y="24.2" width="2.8" height="2.8"/><rect x="11.2" y="24.2" width="2.8" height="2.8"/><rect x="15.4" y="24.2" width="2.8" height="2.8"/><rect x="19.8" y="24.2" width="2.8" height="2.8"/><rect x="24.1" y="24.2" width="2.8" height="2.8"/></svg></div>
<div class="a dt" style="left:2017px;top:31px">3<i class="one">1</i>/<i class="one">1</i>2/2030</div>
<div class="a" style="left:2385px;top:27px"><svg width="33" height="34" viewBox="0 0 33 34" fill="#2e77fc"><path fill-rule="evenodd" d="M0 4H33V34H0Z M2.9 12H30V31H2.9Z"/><rect x="5.30" y="1.5" width="6" height="9" rx="3" fill="#fff"/><rect x="22.10" y="1.5" width="6" height="9" rx="3" fill="#fff"/><rect x="6.80" y="0.8" width="3" height="8" rx="1.5"/><rect x="23.60" y="0.8" width="3" height="8" rx="1.5"/><rect x="6.8" y="16" width="2.8" height="2.8"/><rect x="11.1" y="16" width="2.8" height="2.8"/><rect x="15.0" y="16" width="2.8" height="2.8"/><rect x="19.2" y="16" width="2.8" height="2.8"/><rect x="23.3" y="16" width="2.8" height="2.8"/><rect x="6.8" y="20.1" width="2.8" height="2.8"/><rect x="11.1" y="20.1" width="2.8" height="2.8"/><rect x="15.0" y="20.1" width="2.8" height="2.8"/><rect x="19.2" y="20.1" width="2.8" height="2.8"/><rect x="23.3" y="20.1" width="2.8" height="2.8"/><rect x="6.8" y="24.2" width="2.8" height="2.8"/><rect x="11.1" y="24.2" width="2.8" height="2.8"/><rect x="15.0" y="24.2" width="2.8" height="2.8"/><rect x="19.2" y="24.2" width="2.8" height="2.8"/><rect x="23.3" y="24.2" width="2.8" height="2.8"/></svg></div>
<div class="sel" style="left:2530px;top:20px;width:818px;height:49px"></div>
<div class="a dt" style="left:2543px;top:31px">Sales</div>
<div class="a" style="left:3311px;top:35.5px"><svg width="24" height="15" viewBox="0 0 24 15"><path d="M1.7 2.6L11.8 12.7L21.9 2.6" fill="none" stroke="#5a6a7c" stroke-width="3.3"/></svg></div>
<div class="a" style="left:3559px;top:35.5px"><svg width="18" height="18" viewBox="0 0 18 18"><path d="M2.7 2.2L16.3 15.8M16.3 2.2L2.7 15.8" fill="none" stroke="#7a7a7a" stroke-width="2.7" stroke-linecap="round"/></svg></div>
</div>
<div class="row" style="top:990px">
<div class="a nm" style="left:18px;top:29px">Sean OSullivan</div>
<div class="a dt" style="left:1177px;top:31px">0<i class="one">1</i>/0<i class="one">1</i>/2000</div>
<div class="a" style="left:1544px;top:27px"><svg width="34" height="34" viewBox="0 0 34 34" fill="#2e77fc"><path fill-rule="evenodd" d="M0 4H34V34H0Z M3 12H31V31H3Z"/><rect x="5.50" y="1.5" width="6" height="9" rx="3" fill="#fff"/><rect x="22.80" y="1.5" width="6" height="9" rx="3" fill="#fff"/><rect x="7.00" y="0.8" width="3" height="8" rx="1.5"/><rect x="24.30" y="0.8" width="3" height="8" rx="1.5"/><rect x="7" y="16" width="2.8" height="2.8"/><rect x="11.2" y="16" width="2.8" height="2.8"/><rect x="15.4" y="16" width="2.8" height="2.8"/><rect x="19.8" y="16" width="2.8" height="2.8"/><rect x="24.1" y="16" width="2.8" height="2.8"/><rect x="7" y="20.1" width="2.8" height="2.8"/><rect x="11.2" y="20.1" width="2.8" height="2.8"/><rect x="15.4" y="20.1" width="2.8" height="2.8"/><rect x="19.8" y="20.1" width="2.8" height="2.8"/><rect x="24.1" y="20.1" width="2.8" height="2.8"/><rect x="7" y="24.2" width="2.8" height="2.8"/><rect x="11.2" y="24.2" width="2.8" height="2.8"/><rect x="15.4" y="24.2" width="2.8" height="2.8"/><rect x="19.8" y="24.2" width="2.8" height="2.8"/><rect x="24.1" y="24.2" width="2.8" height="2.8"/></svg></div>
<div class="a dt" style="left:2017px;top:31px">3<i class="one">1</i>/<i class="one">1</i>2/2040</div>
<div class="a" style="left:2385px;top:27px"><svg width="33" height="34" viewBox="0 0 33 34" fill="#2e77fc"><path fill-rule="evenodd" d="M0 4H33V34H0Z M2.9 12H30V31H2.9Z"/><rect x="5.30" y="1.5" width="6" height="9" rx="3" fill="#fff"/><rect x="22.10" y="1.5" width="6" height="9" rx="3" fill="#fff"/><rect x="6.80" y="0.8" width="3" height="8" rx="1.5"/><rect x="23.60" y="0.8" width="3" height="8" rx="1.5"/><rect x="6.8" y="16" width="2.8" height="2.8"/><rect x="11.1" y="16" width="2.8" height="2.8"/><rect x="15.0" y="16" width="2.8" height="2.8"/><rect x="19.2" y="16" width="2.8" height="2.8"/><rect x="23.3" y="16" width="2.8" height="2.8"/><rect x="6.8" y="20.1" width="2.8" height="2.8"/><rect x="11.1" y="20.1" width="2.8" height="2.8"/><rect x="15.0" y="20.1" width="2.8" height="2.8"/><rect x="19.2" y="20.1" width="2.8" height="2.8"/><rect x="23.3" y="20.1" width="2.8" height="2.8"/><rect x="6.8" y="24.2" width="2.8" height="2.8"/><rect x="11.1" y="24.2" width="2.8" height="2.8"/><rect x="15.0" y="24.2" width="2.8" height="2.8"/><rect x="19.2" y="24.2" width="2.8" height="2.8"/><rect x="23.3" y="24.2" width="2.8" height="2.8"/></svg></div>
<div class="sel" style="left:2530px;top:20px;width:818px;height:49px"></div>
<div class="a dt" style="left:2543px;top:31px">Developers</div>
<div class="a" style="left:3311px;top:35.5px"><svg width="24" height="15" viewBox="0 0 24 15"><path d="M1.7 2.6L11.8 12.7L21.9 2.6" fill="none" stroke="#5a6a7c" stroke-width="3.3"/></svg></div>
<div class="a" style="left:3559px;top:35.5px"><svg width="18" height="18" viewBox="0 0 18 18"><path d="M2.7 2.2L16.3 15.8M16.3 2.2L2.7 15.8" fill="none" stroke="#7a7a7a" stroke-width="2.7" stroke-linecap="round"/></svg></div>
</div>
<div class="row" style="top:1080px">
<div class="a nm" style="left:18px;top:29px">Shweta Kashyap</div>
<div class="a dt" style="left:1177px;top:31px">0<i class="one">1</i>/0<i class="one">1</i>/2024</div>
<div class="a" style="left:1544px;top:27px"><svg width="34" height="34" viewBox="0 0 34 34" fill="#2e77fc"><path fill-rule="evenodd" d="M0 4H34V34H0Z M3 12H31V31H3Z"/><rect x="5.50" y="1.5" width="6" height="9" rx="3" fill="#fff"/><rect x="22.80" y="1.5" width="6" height="9" rx="3" fill="#fff"/><rect x="7.00" y="0.8" width="3" height="8" rx="1.5"/><rect x="24.30" y="0.8" width="3" height="8" rx="1.5"/><rect x="7" y="16" width="2.8" height="2.8"/><rect x="11.2" y="16" width="2.8" height="2.8"/><rect x="15.4" y="16" width="2.8" height="2.8"/><rect x="19.8" y="16" width="2.8" height="2.8"/><rect x="24.1" y="16" width="2.8" height="2.8"/><rect x="7" y="20.1" width="2.8" height="2.8"/><rect x="11.2" y="20.1" width="2.8" height="2.8"/><rect x="15.4" y="20.1" width="2.8" height="2.8"/><rect x="19.8" y="20.1" width="2.8" height="2.8"/><rect x="24.1" y="20.1" width="2.8" height="2.8"/><rect x="7" y="24.2" width="2.8" height="2.8"/><rect x="11.2" y="24.2" width="2.8" height="2.8"/><rect x="15.4" y="24.2" width="2.8" height="2.8"/><rect x="19.8" y="24.2" width="2.8" height="2.8"/><rect x="24.1" y="24.2" width="2.8" height="2.8"/></svg></div>
<div class="a dt" style="left:2017px;top:31px">3<i class="one">1</i>/<i class="one">1</i>2/2040</div>
<div class="a" style="left:2385px;top:27px"><svg width="33" height="34" viewBox="0 0 33 34" fill="#2e77fc"><path fill-rule="evenodd" d="M0 4H33V34H0Z M2.9 12H30V31H2.9Z"/><rect x="5.30" y="1.5" width="6" height="9" rx="3" fill="#fff"/><rect x="22.10" y="1.5" width="6" height="9" rx="3" fill="#fff"/><rect x="6.80" y="0.8" width="3" height="8" rx="1.5"/><rect x="23.60" y="0.8" width="3" height="8" rx="1.5"/><rect x="6.8" y="16" width="2.8" height="2.8"/><rect x="11.1" y="16" width="2.8" height="2.8"/><rect x="15.0" y="16" width="2.8" height="2.8"/><rect x="19.2" y="16" width="2.8" height="2.8"/><rect x="23.3" y="16" width="2.8" height="2.8"/><rect x="6.8" y="20.1" width="2.8" height="2.8"/><rect x="11.1" y="20.1" width="2.8" height="2.8"/><rect x="15.0" y="20.1" width="2.8" height="2.8"/><rect x="19.2" y="20.1" width="2.8" height="2.8"/><rect x="23.3" y="20.1" width="2.8" height="2.8"/><rect x="6.8" y="24.2" width="2.8" height="2.8"/><rect x="11.1" y="24.2" width="2.8" height="2.8"/><rect x="15.0" y="24.2" width="2.8" height="2.8"/><rect x="19.2" y="24.2" width="2.8" height="2.8"/><rect x="23.3" y="24.2" width="2.8" height="2.8"/></svg></div>
<div class="sel" style="left:2530px;top:20px;width:818px;height:49px"></div>
<div class="a dt" style="left:2543px;top:31px">Testers</div>
<div class="a" style="left:3311px;top:35.5px"><svg width="24" height="15" viewBox="0 0 24 15"><path d="M1.7 2.6L11.8 12.7L21.9 2.6" fill="none" stroke="#5a6a7c" stroke-width="3.3"/></svg></div>
<div class="a" style="left:3559px;top:35.5px"><svg width="18" height="18" viewBox="0 0 18 18"><path d="M2.7 2.2L16.3 15.8M16.3 2.2L2.7 15.8" fill="none" stroke="#7a7a7a" stroke-width="2.7" stroke-linecap="round"/></svg></div>
</div>
<div class="foot"></div>
</div>
<div class="a lbl" style="left:12.5px;top:1566.5px;color:#959595;letter-spacing:0.035px;transform:scaleY(1.06);transform-origin:0 22px">Number of Resource Groups: <i class="one">1</i>0</div>
</body></html>
